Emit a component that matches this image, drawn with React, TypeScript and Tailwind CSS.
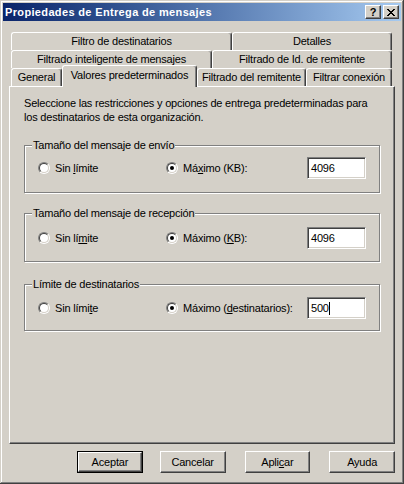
import type { ReactNode } from "react";

const bevelOut =
  "border border-t-white border-l-white border-r-[#404040] border-b-[#404040] shadow-[inset_-1px_-1px_0_#808080]";

function TitleButton({ children }: { children: ReactNode }) {
  return (
    <div
      className={`flex h-[14px] w-[16px] items-center justify-center bg-[#d4d0c8] ${bevelOut}`}
    >
      {children}
    </div>
  );
}

function CloseGlyph() {
  // classic 8x7 pixel "X"
  const rows = ["11000011", "01100110", "00111100", "00011000", "00111100", "01100110", "11000011"];
  return (
    <svg width="8" height="7" viewBox="0 0 8 7" shapeRendering="crispEdges">
      {rows.flatMap((r, y) =>
        r.split("").map((c, x) => (c === "1" ? <rect key={`${x}-${y}`} x={x} y={y} width="1" height="1" fill="#000" /> : null)),
      )}
    </svg>
  );
}

function Tab({ className, active, children }: { className: string; active?: boolean; children: ReactNode }) {
  return (
    <div
      className={`flex shrink-0 items-center justify-center rounded-t-[3px] border-t border-l border-r border-white border-r-[#404040] bg-[#d4d0c8] shadow-[inset_-1px_0_0_#808080] ${
        active ? "relative z-10 -mb-px h-[22px] pb-[2px]" : "h-[18px]"
      } ${className}`}
    >
      {children}
    </div>
  );
}

function Radio({ checked }: { checked?: boolean }) {
  return (
    <div className="flex h-[12px] w-[12px] shrink-0 rounded-full border border-t-[#808080] border-l-[#808080] border-b-white border-r-white">
      <div className="flex h-[10px] w-[10px] items-center justify-center rounded-full border border-t-[#404040] border-l-[#404040] border-b-[#d4d0c8] border-r-[#d4d0c8] bg-white">
        {checked && <div className="h-[4px] w-[4px] rounded-full bg-black" />}
      </div>
    </div>
  );
}

function TextBox({ value, caret }: { value: string; caret?: boolean }) {
  return (
    <div className="flex h-[22px] w-[59px] items-center border border-t-[#808080] border-l-[#808080] border-b-white border-r-white bg-white pl-[3px] shadow-[inset_1px_1px_0_#404040,inset_-1px_-1px_0_#d4d0c8]">
      <span>{value}</span>
      {caret && <span className="h-[13px] w-px bg-black" />}
    </div>
  );
}

function Group({
  label,
  className,
  rowClass,
  unlimited,
  maximum,
  value,
  caret,
}: {
  label: string;
  className: string;
  rowClass: string;
  unlimited: ReactNode;
  maximum: ReactNode;
  value: string;
  caret?: boolean;
}) {
  return (
    <div className={`relative border border-[#808080] shadow-[inset_1px_1px_0_#fff,1px_1px_0_#fff] ${className}`}>
      <span className="absolute -top-[8px] left-[7px] bg-[#d4d0c8] px-px leading-[14px]">{label}</span>
      <div className={`flex h-[22px] items-center pl-[13px] ${rowClass}`}>
        <div className="flex w-[128px] items-center gap-[5px]">
          <Radio />
          <span>{unlimited}</span>
        </div>
        <div className="flex w-[141px] items-center gap-[5px]">
          <Radio checked />
          <span>{maximum}</span>
        </div>
        <TextBox value={value} caret={caret} />
      </div>
    </div>
  );
}

function Button({ children, isDefault, className = "" }: { children: ReactNode; isDefault?: boolean; className?: string }) {
  if (isDefault) {
    return (
      <div className={`h-[22px] w-[66px] border border-black ${className}`}>
        <div className={`flex h-full w-full items-center justify-center ${bevelOut}`}>{children}</div>
      </div>
    );
  }
  return (
    <div className={`flex h-[22px] w-[66px] items-center justify-center ${bevelOut} ${className}`}>{children}</div>
  );
}

export default function App() {
  return (
    <div className="h-[484px] w-[404px] bg-[#d4d0c8] p-[3px] font-['Liberation_Sans',Arial,sans-serif] text-[11px] tracking-[-0.2px] text-black shadow-[inset_-1px_-1px_0_#404040,inset_1px_1px_0_#d4d0c8,inset_-2px_-2px_0_#808080,inset_2px_2px_0_#ffffff]">
      {/* title bar */}
      <div className="flex h-[18px] items-center bg-linear-to-r from-[#0a246a] to-[#a6caf0] pl-[2px] pr-[2px]">
        <span className="flex-1 text-[11px] font-bold tracking-[0.35px] text-white">
          Propiedades de Entrega de mensajes
        </span>
        <div className="flex gap-[2px]">
          <TitleButton>
            <span className="text-[11px] font-bold leading-none tracking-normal">?</span>
          </TitleButton>
          <TitleButton>
            <CloseGlyph />
          </TitleButton>
        </div>
      </div>

      <div className="px-[6px] pt-[11px]">
        {/* tab rows */}
        <div className="pl-[2px]">
          <div className="flex h-[18px]">
            <Tab className="w-[221px]">Filtro de destinatarios</Tab>
            <Tab className="w-[160px]">Detalles</Tab>
          </div>
          <div className="flex h-[18px]">
            <Tab className="w-[201px]">Filtrado inteligente de mensajes</Tab>
            <Tab className="w-[180px]">Filtrado de Id. de remitente</Tab>
          </div>
          <div className="flex h-[18px] items-end">
            <Tab className="w-[51px]">General</Tab>
            <Tab className="w-[135px]" active>
              Valores predeterminados
            </Tab>
            <Tab className="w-[109px]">Filtrado del remitente</Tab>
            <Tab className="w-[86px]">Filtrar conexión</Tab>
          </div>
        </div>

        {/* page */}
        <div className="h-[358px] border border-t-white border-l-white border-r-[#404040] border-b-[#404040] px-[14px] pt-[9px] shadow-[inset_-1px_-1px_0_#808080]">
          <p className="leading-[14px]">
            Seleccione las restricciones y opciones de entrega predeterminadas para
            <br />
            los destinatarios de esta organización.
          </p>

          <Group
            label="Tamaño del mensaje de envío"
            className="mt-[21px] h-[48px]"
            rowClass="mt-[11px]"
            unlimited={
              <>
                Sin <u>l</u>ímite
              </>
            }
            maximum={
              <>
                Má<u>x</u>imo (KB):
              </>
            }
            value="4096"
          />

          <Group
            label="Tamaño del mensaje de recepción"
            className="mt-[20px] h-[49px]"
            rowClass="mt-[13px]"
            unlimited={
              <>
                Sin lí<u>m</u>ite
              </>
            }
            maximum={
              <>
                Máximo (<u>K</u>B):
              </>
            }
            value="4096"
          />

          <Group
            label="Límite de destinatarios"
            className="mt-[22px] h-[47px]"
            rowClass="mt-[12px]"
            unlimited={
              <>
                Sin lími<u>t</u>e
              </>
            }
            maximum={
              <>
                Máximo (<u>d</u>estinatarios):
              </>
            }
            value="500"
            caret
          />
        </div>

        {/* dialog buttons */}
        <div className="mt-[7px] flex pl-[68px]">
          <Button isDefault>Aceptar</Button>
          <Button className="ml-[17px]">Cancelar</Button>
          <Button className="ml-[19px]">
            <span>
              Apli<u>c</u>ar
            </span>
          </Button>
          <Button className="ml-[19px]">Ayuda</Button>
        </div>
      </div>
    </div>
  );
}
